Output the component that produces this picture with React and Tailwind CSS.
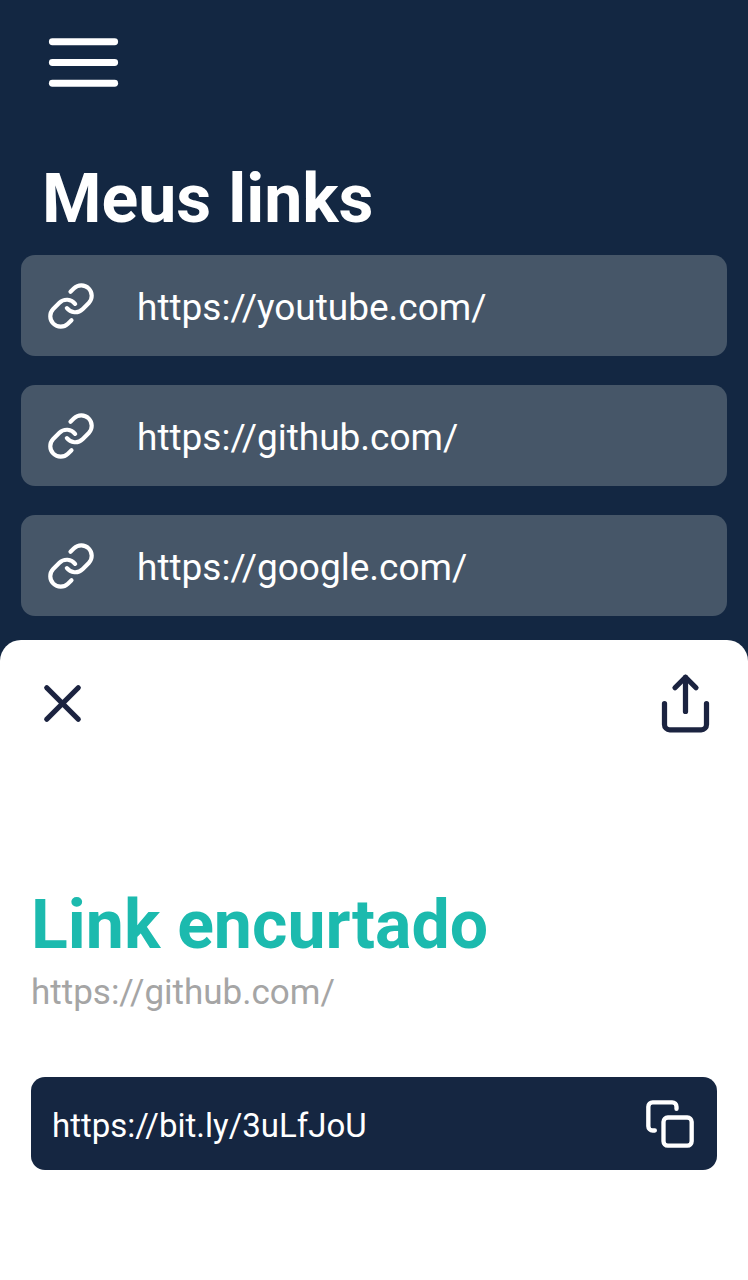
const links = [
  "https://youtube.com/",
  "https://github.com/",
  "https://google.com/",
];

function Icon({ className, children }) {
  return (
    <svg
      viewBox="0 0 24 24"
      fill="none"
      stroke="currentColor"
      strokeWidth="2"
      strokeLinecap="round"
      strokeLinejoin="round"
      aria-hidden="true"
      className={className}
    >
      {children}
    </svg>
  );
}

function LinkRow({ url }) {
  return (
    <li>
      <button
        type="button"
        className="flex h-[101px] w-full items-center gap-[41px] rounded-[14px] bg-[#465668] px-[25px] text-left text-white"
      >
        <Icon className="size-[50px] shrink-0">
          <path d="M10 13a5 5 0 0 0 7.54.54l3-3a5 5 0 0 0-7.07-7.07l-1.72 1.71" />
          <path d="M14 11a5 5 0 0 0-7.54-.54l-3 3a5 5 0 0 0 7.07 7.07l1.71-1.71" />
        </Icon>
        <span className="truncate pt-1 text-[37px] leading-[48px]">{url}</span>
      </button>
    </li>
  );
}

export default function App() {
  return (
    <div className="flex min-h-screen flex-col bg-[#132742] font-['Roboto',sans-serif]">
      <header className="px-[42px] pt-[21px]">
        <button type="button" aria-label="Menu" className="block text-white">
          <Icon className="size-[83px]">
            <path d="M3 6h18" />
            <path d="M3 12h18" />
            <path d="M3 18h18" />
          </Icon>
        </button>
        <h1 className="mt-[54px] text-[68px] leading-[82px] font-bold text-white">
          Meus links
        </h1>
      </header>

      <ul className="mt-[15px] flex flex-col gap-[29px] px-[21px]">
        {links.map((url) => (
          <LinkRow key={url} url={url} />
        ))}
      </ul>

      <section className="mt-6 flex-1 rounded-t-[21px] bg-white px-[31px] pt-8 pb-12">
        <div className="flex items-center justify-between text-[#1b2340]">
          <button type="button" aria-label="Fechar">
            <Icon className="size-[63px]">
              <path d="M18 6 6 18" />
              <path d="m6 6 12 12" />
            </Icon>
          </button>
          <button type="button" aria-label="Compartilhar">
            <Icon className="size-[63px]">
              <path d="M4 12v8a2 2 0 0 0 2 2h12a2 2 0 0 0 2-2v-8" />
              <path d="m16 6-4-4-4 4" />
              <path d="M12 2v13" />
            </Icon>
          </button>
        </div>

        <h2 className="mt-[149px] text-[68px] leading-[82px] font-bold text-[#1cbaae]">
          Link encurtado
        </h2>
        <p className="mt-[3px] text-[35px] leading-[48px] text-[#a5a5a5]">
          https://github.com/
        </p>

        <div className="mt-[60px] flex h-[93px] items-center justify-between rounded-[14px] bg-[#152641] px-[21px] text-white">
          <span className="truncate pt-1 text-[33px] leading-[48px]">
            https://bit.ly/3uLfJoU
          </span>
          <button type="button" aria-label="Copiar">
            <Icon className="size-[52px]">
              <rect x="9" y="9" width="13" height="13" rx="2" />
              <path d="M5 15H4a2 2 0 0 1-2-2V4a2 2 0 0 1 2-2h9a2 2 0 0 1 2 2v1" />
            </Icon>
          </button>
        </div>
      </section>
    </div>
  );
}
